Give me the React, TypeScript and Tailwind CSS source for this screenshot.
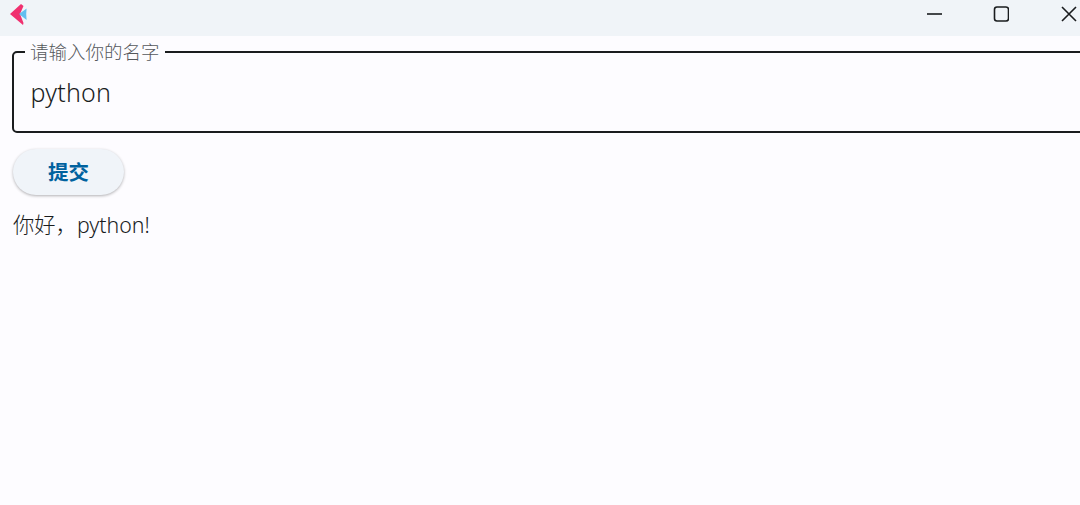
export default function App() {
  return (
    <div
      className="h-[505px] w-[1080px] overflow-hidden bg-[#fdfcff] text-[#1a1c1e]"
      style={{ fontFamily: '"Noto Sans", "Noto Sans CJK SC", sans-serif' }}
    >
      <div className="flex h-9 items-start justify-between bg-[#f0f4f8]">
        <svg className="ml-[10px] mt-[3px] h-[23px] w-[18px]" viewBox="0 0 18 23">
          <path d="M0 11 L11 1 L13.5 3 L10 11 L13.5 20 L13 22 Z" fill="#f0306f" />
          <path d="M9 11 L16.6 5.5 Q15.8 11 16.6 17 Z" fill="#62bff0" />
        </svg>
        <div className="mt-[6px] flex items-center">
          <svg className="h-4 w-4" viewBox="0 0 16 16">
            <path d="M0 8 H15" stroke="#1a1c1e" strokeWidth="1.6" fill="none" />
          </svg>
          <svg className="ml-[50px] h-4 w-4" viewBox="0 0 16 16">
            <rect x="1.5" y="1" width="14" height="14" rx="2.5" stroke="#1a1c1e" strokeWidth="1.6" fill="none" />
          </svg>
          <svg className="ml-[52px] mr-[3px] h-4 w-4" viewBox="0 0 16 16">
            <path d="M1 1 L15 15 M15 1 L1 15" stroke="#1a1c1e" strokeWidth="1.6" fill="none" />
          </svg>
        </div>
      </div>

      <div className="flex flex-col items-start pl-3">
        <fieldset className="mt-[5px] h-[92px] w-[1100px] rounded-[5px] border-2 border-[#1a1c1e] pl-[11px]">
          <legend className="px-[5px] text-[18.5px] font-light leading-[22px] text-[#55585c]">
            请输入你的名字
          </legend>
          <div className="mt-[13px] px-[5.5px] text-[25px] font-light leading-[32px] tracking-[0.01em]">python</div>
        </fieldset>

        <button className="ml-px mt-4 flex h-[46px] w-[111px] items-center justify-center rounded-full bg-[#f0f4f9] text-[20.5px] font-semibold text-[#00629f] shadow-[0_1px_3px_rgba(0,0,0,0.3)]">
          提交
        </button>

        <p className="ml-px mt-4 text-[21.3px] font-light leading-7 text-[#1a1c1e]">你好，python!</p>
      </div>
    </div>
  );
}
